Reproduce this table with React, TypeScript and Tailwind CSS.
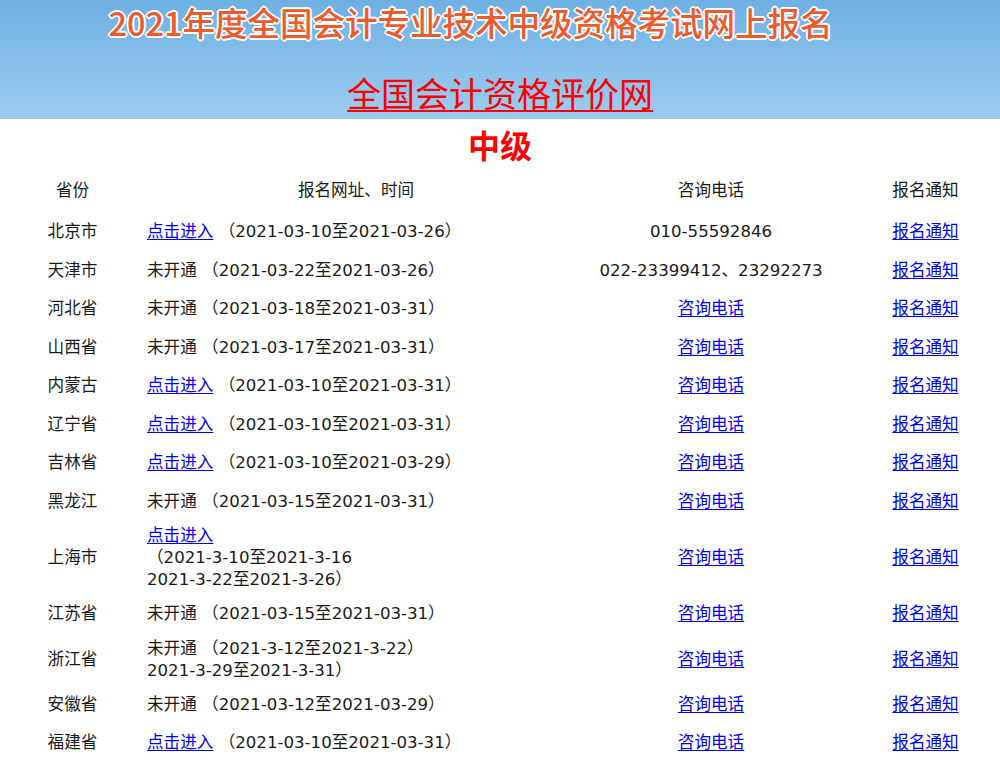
const rows: {
  name: string;
  open: boolean;
  lines: string[];
  phone?: string;
}[] = [
  { name: '北京市', open: true, lines: ['（2021-03-10至2021-03-26）'], phone: '010-55592846' },
  { name: '天津市', open: false, lines: ['（2021-03-22至2021-03-26）'], phone: '022-23399412、23292273' },
  { name: '河北省', open: false, lines: ['（2021-03-18至2021-03-31）'] },
  { name: '山西省', open: false, lines: ['（2021-03-17至2021-03-31）'] },
  { name: '内蒙古', open: true, lines: ['（2021-03-10至2021-03-31）'] },
  { name: '辽宁省', open: true, lines: ['（2021-03-10至2021-03-31）'] },
  { name: '吉林省', open: true, lines: ['（2021-03-10至2021-03-29）'] },
  { name: '黑龙江', open: false, lines: ['（2021-03-15至2021-03-31）'] },
  { name: '上海市', open: true, lines: ['', '（2021-3-10至2021-3-16', '2021-3-22至2021-3-26）'] },
  { name: '江苏省', open: false, lines: ['（2021-03-15至2021-03-31）'] },
  { name: '浙江省', open: false, lines: ['（2021-3-12至2021-3-22）', '2021-3-29至2021-3-31）'] },
  { name: '安徽省', open: false, lines: ['（2021-03-12至2021-03-29）'] },
  { name: '福建省', open: true, lines: ['（2021-03-10至2021-03-31）'] },
];

const font = { fontFamily: '"DejaVu Sans", "Noto Sans CJK SC", sans-serif' };

function Link({ children }: { children: React.ReactNode }) {
  return (
    <a href="#" className="text-[#0000ff] underline underline-offset-2">
      {children}
    </a>
  );
}

export default function App() {
  return (
    <div className="w-[1000px] bg-white text-[16.6px] leading-[22px] text-[#1a1a1a]" style={font}>
      {/* banner */}
      <div className="h-[119px] bg-gradient-to-b from-[#6eb0e3] to-[#9dcdef] flex flex-col items-center">
        <div
          className="pr-[59px] pt-[1px] text-[32.5px] leading-[42px] font-medium text-[#ec5b2e] whitespace-nowrap"
          style={{
            fontFamily: '"Noto Sans CJK SC", sans-serif',
            textShadow:
              '2px 0 0 #fff, -2px 0 0 #fff, 0 2px 0 #fff, 0 -2px 0 #fff, 1px 1px 0 #fff, -1px -1px 0 #fff, 1px -1px 0 #fff, -1px 1px 0 #fff',
          }}
        >
          2021年度全国会计专业技术中级资格考试网上报名
        </div>
        <a
          href="#"
          className="mt-[30px] text-[34px] leading-[40px] text-[#ff0000] underline decoration-2 underline-offset-[3px] whitespace-nowrap"
          style={{ fontFamily: '"Noto Sans CJK SC", sans-serif' }}
        >
          全国会计资格评价网
        </a>
      </div>

      {/* content */}
      <div className="px-[2px]">
        <h1
          className="h-[50px] flex items-center justify-center text-[32px] font-bold text-[#ff0000]"
          style={{ fontFamily: '"Noto Sans CJK SC", sans-serif' }}
        >
          中级
        </h1>
        <table className="w-[996px] table-fixed border-collapse">
          <colgroup>
            <col className="w-[141px]" />
            <col className="w-[426px]" />
            <col className="w-[284px]" />
            <col className="w-[145px]" />
          </colgroup>
          <thead>
            <tr className="h-[44px]">
              <th className="font-normal text-center align-middle">省份</th>
              <th className="font-normal text-center align-middle">报名网址、时间</th>
              <th className="font-normal text-center align-middle">咨询电话</th>
              <th className="font-normal text-center align-middle">报名通知</th>
            </tr>
          </thead>
          <tbody>
            {rows.map((r) => (
              <tr key={r.name} className="h-[38.5px]">
                <td className="text-center align-middle py-1">{r.name}</td>
                <td className="align-middle py-1 px-1 whitespace-nowrap">
                  {r.lines.length === 3 ? (
                    <>
                      <div>
                        <Link>点击进入</Link>
                      </div>
                      <div>{r.lines[1]}</div>
                      <div>{r.lines[2]}</div>
                    </>
                  ) : (
                    <>
                      <div>
                        {r.open ? <Link>点击进入</Link> : '未开通'} {r.lines[0]}
                      </div>
                      {r.lines[1] && <div>{r.lines[1]}</div>}
                    </>
                  )}
                </td>
                <td className="text-center align-middle py-1 whitespace-nowrap">
                  {r.phone ? r.phone : <Link>咨询电话</Link>}
                </td>
                <td className="text-center align-middle py-1">
                  <Link>报名通知</Link>
                </td>
              </tr>
            ))}
          </tbody>
        </table>
      </div>
    </div>
  );
}
